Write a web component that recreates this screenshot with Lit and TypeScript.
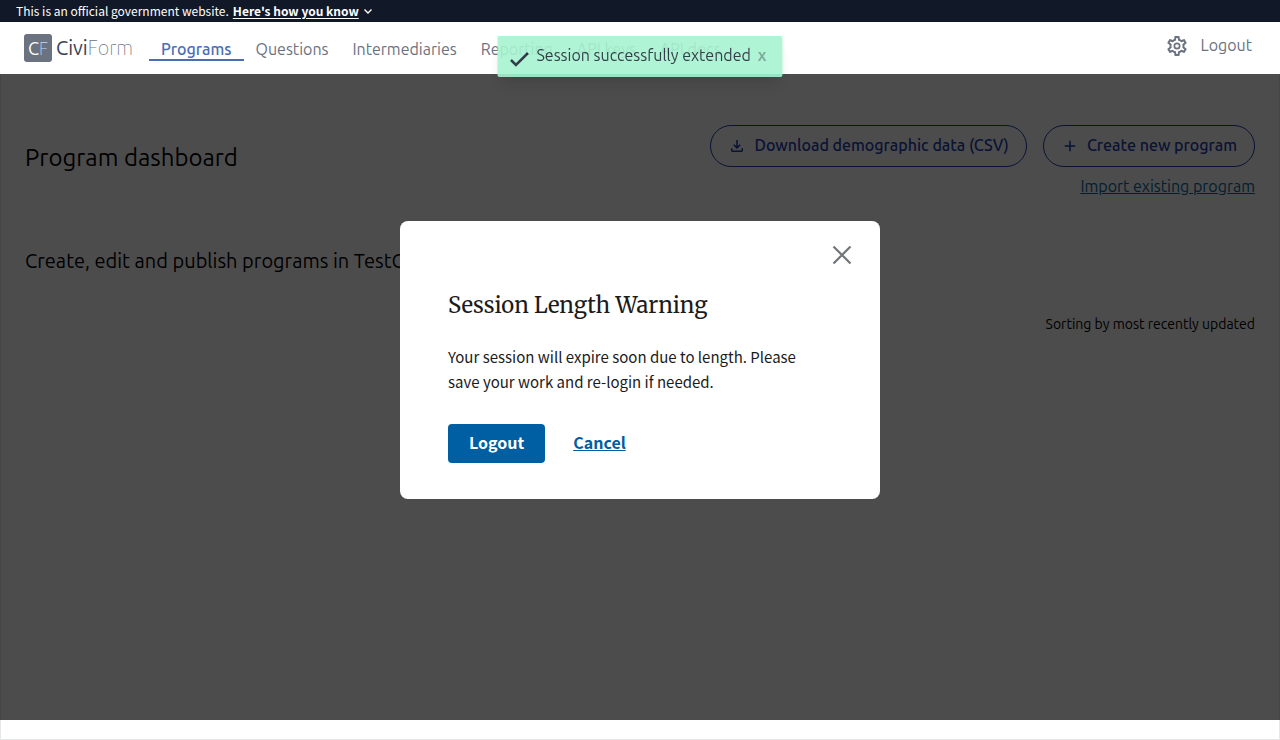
import { LitElement, html, css } from "lit";
import { customElement, state } from "lit/decorators.js";

const NAV = ["Programs", "Questions", "Intermediaries", "Reporting", "API keys", "API docs"];

@customElement("app-root")
export class AppRoot extends LitElement {
  @state() private toastOpen = true;
  @state() private modalOpen = true;

  static styles = css`
    :host {
      --ui: Ubuntu, "Open Sans", sans-serif;
      --body: "Source Sans Pro", "Noto Sans CJK SC", sans-serif;
      --heading: Merriweather, "DejaVu Serif", serif;
      display: flex;
      flex-direction: column;
      min-height: 100vh;
      background: #fff;
      font-family: var(--ui);
      font-size: 16px;
      line-height: 24px;
      font-weight: 400;
      color: #000;
    }
    * { box-sizing: border-box; }
    button { font: inherit; color: inherit; background: none; border: 0; padding: 0; cursor: pointer; }
    h1, h2, p { margin: 0; font-weight: inherit; }
    svg { display: block; flex: none; }

    .banner {
      position: relative;
      z-index: 2;
      display: flex;
      align-items: center;
      gap: 4px;
      padding: 0 16px;
      background: #111827;
      color: #fff;
      font: 400 12px/22px var(--body);
    }
    .banner button { display: flex; align-items: center; gap: 4px; font-weight: 700; }
    .banner span { text-decoration: underline; text-underline-offset: 2px; }

    .header {
      position: relative;
      z-index: 2;
      display: flex;
      align-items: center;
      justify-content: space-between;
      padding: 0 28px 0 24px;
      height: 52px;
      background: #fff;
      color: #6b7280;
    }
    .start, .end, nav, .brand { display: flex; align-items: center; }
    .start { gap: 16px; }
    .end { gap: 12px; padding-bottom: 6px; }
    .end svg { margin-top: 2px; }
    .brand { gap: 4px; color: #6b7280; text-decoration: none; font-size: 20px; line-height: 28px; font-weight: 100; }
    .mark { width: 28px; border-radius: 3px; background: #6b7280; color: #fff; font-size: 18px; font-weight: 400; text-align: center; }
    .mark b { font-weight: 100; color: #bfdbfe; }
    .dark { color: #374151; font-weight: 400; }
    nav a { padding: 4px 12px 0; border-bottom: 2px solid transparent; color: inherit; line-height: 20px; text-decoration: none; }
    nav a.current { color: #4a6db5; border-color: #4a6db5; font-weight: 500; }
    .end a { color: inherit; text-decoration: none; }

    main {
      flex: 1;
      display: flex;
      flex-direction: column;
      padding: 51px 24px 24px;
      border: 1px solid #e5e7eb;
      border-top: 0;
    }
    .top { display: flex; justify-content: space-between; align-items: flex-start; }
    h1 { padding-top: 17px; font-size: 24px; line-height: 32px; }
    .actions { display: flex; flex-direction: column; align-items: flex-end; gap: 7px; }
    .row { display: flex; gap: 16px; }
    .pill {
      display: flex;
      align-items: center;
      gap: 8px;
      height: 42px;
      padding: 0 17px 2px;
      border: 1px solid #1e40af;
      border-radius: 21px;
      color: #1e40af;
      font-weight: 500;
    }
    .pill svg { margin-top: 2px; }
    .actions a { color: #0b6a9e; }
    .intro { margin-top: 49px; font-size: 20px; line-height: 28px; }
    .sort { margin-top: 39px; font-size: 14px; line-height: 20px; text-align: right; }

    .toast {
      position: fixed;
      z-index: 4;
      top: 36px;
      left: 50%;
      transform: translateX(-50%);
      display: flex;
      align-items: flex-start;
      gap: 7px;
      padding: 7px 16px 9px 12px;
      border-radius: 2px;
      background: #a7f3d0;
      opacity: 0.9;
      color: #1f2937;
      box-shadow: 0 10px 15px -3px rgba(0, 0, 0, 0.1), 0 4px 6px -2px rgba(0, 0, 0, 0.05);
      white-space: nowrap;
    }
    .toast svg { margin-top: 7px; }
    .toast button { font-weight: 700; opacity: 0.4; }

    .overlay {
      position: fixed;
      z-index: 1;
      inset: 0 0 20px;
      display: flex;
      align-items: center;
      justify-content: center;
      background: rgba(0, 0, 0, 0.7);
    }
    .modal {
      display: flex;
      flex-direction: column;
      width: 480px;
      max-width: 90%;
      padding: 20px 24px 36px;
      border-radius: 8px;
      background: #fff;
      color: #1b1b1b;
      font: 400 15px/25px var(--body);
    }
    .close { align-self: flex-end; }
    .content { padding: 20px 24px 0; }
    h2 { font: 400 22px/32px var(--heading); }
    .content p { margin-top: 23px; padding-right: 16px; }
    .buttons { display: flex; align-items: center; gap: 28px; margin-top: 30px; font-size: 16px; font-weight: 700; }
    .primary { padding: 6px 21px 8px; border-radius: 4px; background: #005ea2; color: #fff; }
    .link { padding-bottom: 2px; color: #005ea2; text-decoration: underline; }
  `;

  render() {
    return html`
      <div class="banner">
        This is an official government website.
        <button>
          <span>Here's how you know</span>
          <svg width="10" height="10" viewBox="0 0 10 10" fill="none" stroke="#fff" stroke-width="1.4"><path d="M1.5 3.5 5 7l3.500-3.500" /></svg>
        </button>
      </div>
      <header class="header">
        <div class="start">
          <a class="brand" href="#"><span class="mark">C<b>F</b></span><span><span class="dark">Civi</span>Form</span></a>
          <nav>${NAV.map((n, i) => html`<a href="#" class=${i === 0 ? "current" : ""}>${n}</a>`)}</nav>
        </div>
        <div class="end">
          <button aria-label="Settings">
            <svg width="24" height="24" viewBox="0 0 24 24" fill="#6b7280"><path d="M19.430 12.980c.04-.32.070-.64.070-.98s-.03-.66-.07-.98l2.110-1.650c.19-.15.24-.42.120-.64l-2-3.460c-.09-.16-.26-.25-.44-.25-.06 0-.12.010-.17.030l-2.490 1c-.52-.4-1.080-.73-1.690-.98l-.38-2.650C14.460 2.180 14.250 2 14 2h-4c-.25 0-.46.180-.49.420l-.38 2.650c-.61.250-1.170.590-1.690.98l-2.490-1c-.06-.02-.12-.03-.18-.03-.17 0-.34.090-.43.250l-2 3.460c-.13.220-.07.490.120.640l2.110 1.650c-.04.320-.07.650-.07.980s.03.660.070.980l-2.110 1.650c-.19.150-.24.420-.12.640l2 3.460c.09.160.26.250.44.250.06 0 .12-.01.170-.03l2.490-1c.52.400 1.080.730 1.690.980l.38 2.650c.03.240.24.420.490.420h4c.25 0 .46-.18.490-.42l.38-2.650c.61-.25 1.170-.59 1.690-.98l2.490 1c.06.020.12.030.180.030.17 0 .34-.09.430-.25l2-3.460c.12-.22.070-.49-.12-.64l-2.110-1.650zm-1.980-1.710c.04.310.050.520.050.730s-.02.430-.05.730l-.14 1.130.89.700 1.080.840-.7 1.210-1.270-.51-1.040-.42-.9.680c-.43.320-.84.560-1.250.730l-1.060.43-.16 1.130-.2 1.350h-1.400l-.19-1.350-.16-1.130-1.060-.43c-.43-.18-.83-.41-1.230-.71l-.91-.7-1.060.43-1.270.51-.7-1.210 1.080-.84.89-.7-.14-1.130c-.03-.31-.05-.54-.05-.74s.02-.43.050-.73l.14-1.130-.89-.7-1.080-.84.700-1.210 1.270.51 1.040.42.900-.68c.43-.32.840-.56 1.250-.73l1.060-.43.160-1.130.200-1.350h1.390l.19 1.350.160 1.130 1.060.43c.43.180.830.410 1.230.710l.91.700 1.060-.43 1.270-.51.700 1.210-1.070.85-.89.700.140 1.130zM12 8.500a3.500 3.500 0 1 0 0 7 3.500 3.500 0 0 0 0-7zm0 5.300a1.800 1.800 0 1 1 0-3.600 1.800 1.800 0 0 1 0 3.600z" /></svg>
          </button>
          <a href="#">Logout</a>
        </div>
      </header>
      <main>
        <div class="top">
          <h1>Program dashboard</h1>
          <div class="actions">
            <div class="row">
              <button class="pill">
                <svg width="18" height="18" viewBox="0 0 24 24" fill="currentColor"><path d="M12 16 7 11l1.400-1.450L11 12.150V4h2v8.150l2.600-2.600L17 11zM6 20c-1.100 0-2-.9-2-2v-3h2v3h12v-3h2v3c0 1.100-.9 2-2 2z" /></svg>
                Download demographic data (CSV)
              </button>
              <button class="pill">
                <svg width="18" height="18" viewBox="0 0 24 24" fill="currentColor"><path d="M19 13h-6v6h-2v-6H5v-2h6V5h2v6h6z" /></svg>
                Create new program
              </button>
            </div>
            <a href="#">Import existing program</a>
          </div>
        </div>
        <p class="intro">Create, edit and publish programs in TestCity</p>
        <p class="sort">Sorting by most recently updated</p>
      </main>
      ${this.toastOpen
        ? html`<div class="toast" role="status">
            <svg width="20" height="18" viewBox="0 0 20 18" fill="none" stroke="#1f2937" stroke-width="2.500"><path d="m1.500 10 5 5L18.500 3" /></svg>
            Session successfully extended
            <button aria-label="Dismiss" @click=${() => (this.toastOpen = false)}>x</button>
          </div>`
        : ""}
      ${this.modalOpen
        ? html`<div class="overlay">
            <section class="modal" role="dialog" aria-labelledby="title">
              <button class="close" aria-label="Close" @click=${() => (this.modalOpen = false)}>
                <svg width="28" height="28" viewBox="0 0 28 28" fill="none" stroke="#71767a" stroke-width="2.200"><path d="m5.500 5.500 17 17m0-17-17 17" /></svg>
              </button>
              <div class="content">
                <h2 id="title">Session Length Warning</h2>
                <p>Your session will expire soon due to length. Please save your work and re-login if needed.</p>
                <div class="buttons">
                  <button class="primary">Logout</button>
                  <button class="link" @click=${() => (this.modalOpen = false)}>Cancel</button>
                </div>
              </div>
            </section>
          </div>`
        : ""}
    `;
  }
}
